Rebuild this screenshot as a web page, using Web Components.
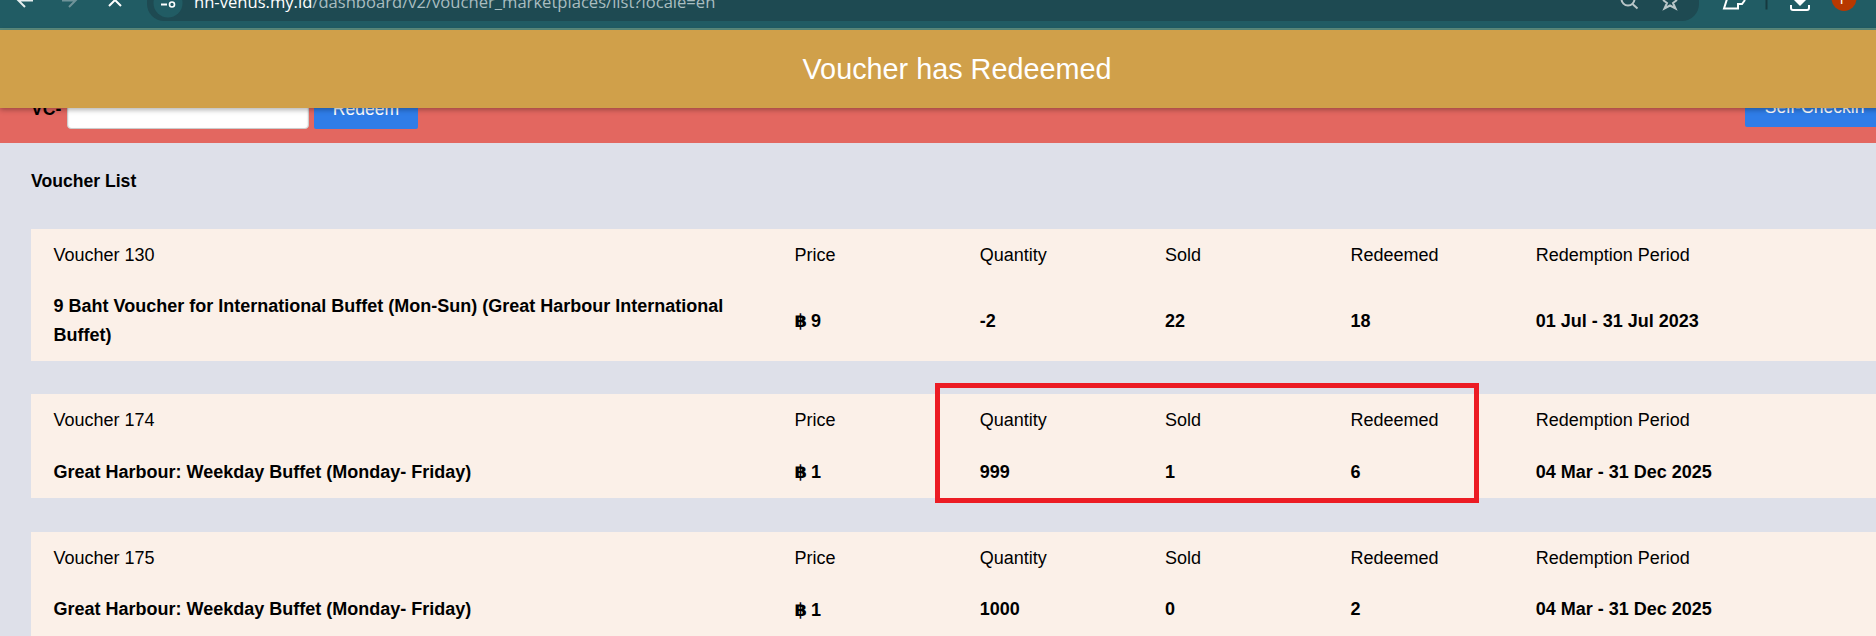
<!DOCTYPE html>
<html>
<head>
<meta charset="utf-8">
<title>Voucher List</title>
<style>
    html, body {
        margin: 0;
        height: 636px;
        overflow: hidden;
    }
    body {
        position: relative;
        background: #dee0e9;
        color: #000;
        font-family: "Liberation Sans", Arial, sans-serif;
        font-size: 17.6px;
    }
</style>
</head>
<body>
<browser-bar url-host="nh-venus.my.id" url-path="/dashboard/v2/voucher_marketplaces/list?locale=en"></browser-bar>
<flash-banner>Voucher has Redeemed</flash-banner>
<redeem-bar></redeem-bar>
<voucher-list heading="Voucher List">
    <voucher-card number="130" price="9" quantity="-2" sold="22" redeemed="18" period="01 Jul - 31 Jul 2023">9 Baht Voucher for International Buffet (Mon-Sun) (Great Harbour International Buffet)</voucher-card>
    <voucher-card number="174" price="1" quantity="999" sold="1" redeemed="6" period="04 Mar - 31 Dec 2025">Great Harbour: Weekday Buffet (Monday- Friday)</voucher-card>
    <voucher-card number="175" price="1" quantity="1000" sold="0" redeemed="2" period="04 Mar - 31 Dec 2025">Great Harbour: Weekday Buffet (Monday- Friday)</voucher-card>
</voucher-list>
<highlight-box></highlight-box>

<script>
class BrowserBar extends HTMLElement {
    constructor() {
        super();
        this.attachShadow({ mode: 'open' });
    }

    connectedCallback() {
        this.shadowRoot.innerHTML = `
        <style>
            :host {
                display: flex;
                height: 28px;
                border-bottom: 2px solid #5b8a7c;
                background: #215c64;
                overflow: hidden;
            }
            svg {
                display: block;
                flex: none;
            }
            .address {
                flex: 1;
                height: 21px;
                margin-left: 6px;
                display: flex;
                background: #1e4a52;
                border-radius: 0 0 17px 17px;
                overflow: hidden;
            }
            .chip {
                margin-left: 6px;
            }
            .url {
                margin: -10px 0 0 11px;
                font: 16.6px/24px "Open Sans", sans-serif;
                color: #a9bdc0;
                white-space: nowrap;
            }
            .url b {
                font-weight: normal;
                color: #fff;
            }
        </style>
        <svg width="141" height="28" viewBox="0 0 141 28" fill="none" stroke-width="2">
            <path d="M25 7L18.500 0.500H33" stroke="#e6eeee" />
            <path d="M69 7L75.500 0.500H62" stroke="#6f9399" />
            <path d="M109 6L115 0L121 6" stroke="#fff"/>
        </svg>
        <div class="address">
            <svg class="chip" width="30" height="21" viewBox="0 0 30 21">
                <circle cx="15" cy="3" r="14.5" fill="#215c64"/>
                <path d="M8 4.5H14" stroke="#fff" stroke-width="2"/>
                <circle cx="19" cy="4.5" r="2.5" fill="none" stroke="#fff" stroke-width="1.6"/>
            </svg>
            <div class="url"><b>${this.getAttribute('url-host')}</b>${this.getAttribute('url-path')}</div>
            <svg style="margin-left:auto" width="89" height="21" viewBox="0 0 89 21" fill="none" stroke="#b9c6c8" stroke-width="2">
                <circle cx="18" cy="-1" r="6.5"/>
                <path d="M22.500 4L27.500 8.500"/>
                <path d="M53 0L57 3L54.500 8.500L60 5.500L65.500 8.500L63 3L67 0"/>
            </svg>
        </div>
        <svg width="177" height="28" viewBox="0 0 177 28">
            <path d="M28 -1L25 8.500H39V4H43L46 0" fill="none" stroke="#fff" stroke-width="2"/>
            <rect x="66.500" y="0" width="2" height="9.500" fill="#16393f"/>
            <path d="M95 0H107L101 6Z" fill="#fff"/>
            <path d="M92 5V8Q92 10 94 10H108Q110 10 110 8V5" fill="none" stroke="#fff" stroke-width="2"/>
            <circle cx="145" cy="-1.500" r="12.500" fill="#b83800"/>
            <text x="141" y="3.500" fill="#fff" font-family="Liberation Sans" font-size="13">F</text>
        </svg>
        `;
    }
}

// Flash message sitting on top of the page header
class FlashBanner extends HTMLElement {
    constructor() {
        super();
        this.attachShadow({ mode: 'open' });
        this.shadowRoot.innerHTML = `
        <style>
            :host {
                position: absolute;
                top: 30px;
                left: 0;
                z-index: 10;
                display: block;
                box-sizing: border-box;
                width: 1914px;
                height: 78px;
                background: #d0a04a;
                box-shadow: 0 2px 5px rgba(0,0,0,0.3);
                color: #fff;
                font-size: 28.8px;
                line-height: 78px;
                text-align: center;
            }
        </style>
        <slot></slot>
        `;
    }
}

class RedeemBar extends HTMLElement {
    constructor() {
        super();
        this.attachShadow({ mode: 'open' });
        this.shadowRoot.innerHTML = `
        <style>
            :host {
                display: flex;
                align-items: flex-end;
                box-sizing: border-box;
                height: 113px;
                padding: 0 0 14px 31px;
                background: #e36760;
            }
            label {
                width: 36px;
                font-weight: bold;
                line-height: 34px;
                margin-bottom: 3px;
            }
            input {
                box-sizing: border-box;
                width: 242px;
                height: 40px;
                padding: 0;
                border: 1px solid #ccc;
                border-radius: 4px;
                background: #fff;
                box-shadow: inset 0 1px 2px rgba(0,0,0,0.2);
            }
            button {
                box-sizing: border-box;
                height: 40px;
                padding: 0 18px;
                border: 0;
                border-radius: 2px;
                background: #2f7de8;
                color: #fff;
                font: inherit;
                line-height: 40px;
            }
            .redeem {
                width: 104px;
                margin-left: 5px;
            }
            .checkin {
                margin: 0 -8px 2px auto;
                padding: 0 19.500px;
            }
        </style>
        <label>VC-</label>
        <input type="text">
        <button class="redeem">Redeem</button>
        <button class="checkin">Self-Checkin</button>
        `;
    }
}

class VoucherList extends HTMLElement {
    constructor() {
        super();
        this.attachShadow({ mode: 'open' });
    }

    connectedCallback() {
        this.shadowRoot.innerHTML = `
        <style>
            :host {
                display: block;
                padding: 25px 0 0 31px;
            }
            h2 {
                margin: 0 0 35px;
                font-size: 17.6px;
                line-height: 26px;
            }
            .cards {
                display: flex;
                flex-direction: column;
                gap: 33.33px;
            }
        </style>
        <h2>${this.getAttribute('heading')}</h2>
        <div class="cards"><slot></slot></div>
        `;
    }
}

class VoucherCard extends HTMLElement {
    constructor() {
        super();
        this.attachShadow({ mode: 'open' });
    }

    connectedCallback() {
        const attr = name => this.getAttribute(name);
        this.shadowRoot.innerHTML = `
        <style>
            :host {
                display: grid;
                grid-template-columns: 741px repeat(4, 185.3px) 1fr;
                row-gap: 22px;
                align-items: center;
                padding: 12px 0 11px 22.5px;
                background: #fbf0e8;
                font-size: 18px;
                line-height: 29px;
            }
            .value {
                font-weight: bold;
            }
            .title {
                padding-right: 22px;
            }
            .baht {
                font-family: "DejaVu Sans", sans-serif;
                font-size: 18px;
                letter-spacing: -1px;
            }
        </style>
        <div>Voucher ${attr('number')}</div>
        <div>Price</div>
        <div>Quantity</div>
        <div>Sold</div>
        <div>Redeemed</div>
        <div>Redemption Period</div>
        <div class="value title"><slot></slot></div>
        <div class="value"><span class="baht">฿</span> ${attr('price')}</div>
        <div class="value">${attr('quantity')}</div>
        <div class="value">${attr('sold')}</div>
        <div class="value">${attr('redeemed')}</div>
        <div class="value">${attr('period')}</div>
        `;
    }
}

// Red marker drawn over the screenshot
class HighlightBox extends HTMLElement {
    constructor() {
        super();
        this.attachShadow({ mode: 'open' });
        this.shadowRoot.innerHTML = `
        <style>
            :host {
                position: absolute;
                top: 383px;
                left: 935px;
                box-sizing: border-box;
                width: 544px;
                height: 120px;
                border: 5px solid #ec1c24;
            }
        </style>
        `;
    }
}

customElements.define('browser-bar', BrowserBar);
customElements.define('flash-banner', FlashBanner);
customElements.define('redeem-bar', RedeemBar);
customElements.define('voucher-list', VoucherList);
customElements.define('voucher-card', VoucherCard);
customElements.define('highlight-box', HighlightBox);
</script>
</body>
</html>
